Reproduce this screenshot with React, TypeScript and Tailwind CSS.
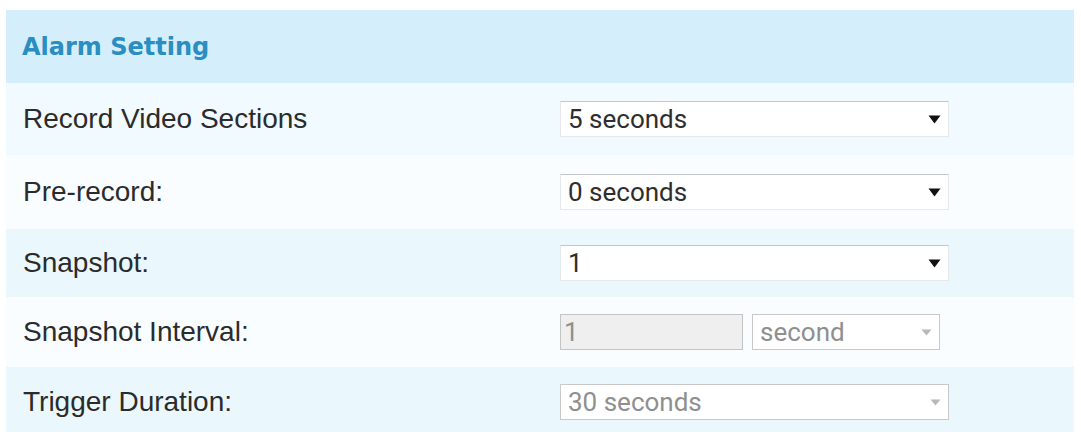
const font = { fontFamily: '"Liberation Sans", Arial, sans-serif' };
const fieldFont = { fontFamily: 'Roboto, "Liberation Sans", Arial, sans-serif' };

const Arrow = ({ disabled }: { disabled?: boolean }) =>
  disabled ? (
    <svg width="11" height="7" viewBox="0 0 11 7" className="shrink-0">
      <path d="M0.5 0.5h10L5.5 6.5z" fill="#b8b8b8" />
    </svg>
  ) : (
    <svg width="13" height="9" viewBox="0 0 13 9" className="shrink-0">
      <path d="M0.5 0.5h12L6.5 8.5z" fill="#111" />
    </svg>
  );

const Select = ({
  value,
  disabled,
  className = "w-[389px]",
}: {
  value: string;
  disabled?: boolean;
  className?: string;
}) => (
  <div
    style={fieldFont}
    className={`${className} h-[36px] flex items-center justify-between pl-[7px] pr-[7px] bg-white border ${
      disabled ? "border-[#c9c9c9] text-[#8f8f8f]" : "border-[#e6e9eb] border-t-[#c3c7ca] text-[#2e2e2e]"
    } text-[26px] leading-none`}
  >
    <span>{value}</span>
    <Arrow disabled={disabled} />
  </div>
);

const rows = [
  { label: "Record Video Sections", bg: "bg-[#f1fafe]", h: "h-[72px]" },
  { label: "Pre-record:", bg: "bg-[#fafdff]", h: "h-[74px]" },
  { label: "Snapshot:", bg: "bg-[#eaf7fd]", h: "h-[68px]" },
  { label: "Snapshot Interval:", bg: "bg-[#fafdff]", h: "h-[70px]" },
  { label: "Trigger Duration:", bg: "bg-[#eaf7fd]", h: "h-[70px]" },
];

export default function App() {
  return (
    <div className="w-[1081px] h-[432px] bg-white pt-[10px] pl-[6px] overflow-hidden" style={font}>
      <div className="w-[1068px]">
        <div className="h-[73px] bg-[#d4effb] flex items-center pl-[16px]">
          <span
            className="text-[#2a8ec2] font-bold text-[24px]"
            style={{ fontFamily: '"DejaVu Sans", Verdana, sans-serif' }}
          >
            Alarm Setting
          </span>
        </div>
        {rows.map((r, i) => (
          <div key={r.label} className={`${r.h} ${r.bg} flex items-center`}>
            <div className="w-[554px] pl-[17px] text-[28px] text-[#2b2b2b]">{r.label}</div>
            {i === 0 && <Select value="5 seconds" />}
            {i === 1 && <Select value="0 seconds" />}
            {i === 2 && <Select value="1" />}
            {i === 3 && (
              <div className="flex items-center gap-[9px]">
                <div
                  style={fieldFont}
                  className="w-[183px] h-[36px] bg-[#efefef] border border-[#c4c4c4] text-[#8f8f8f] text-[26px] leading-none flex items-center pl-[3px]"
                >
                  1
                </div>
                <Select value="second" disabled className="w-[188px]" />
              </div>
            )}
            {i === 4 && <Select value="30 seconds" disabled />}
          </div>
        ))}
      </div>
    </div>
  );
}
